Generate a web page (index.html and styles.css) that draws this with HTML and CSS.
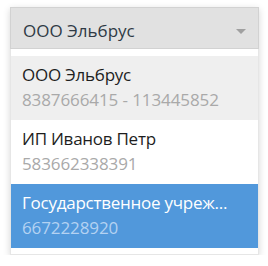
FILE: index.html
```html
<!DOCTYPE html>
<html lang="ru">
<head>
<meta charset="utf-8">
<link rel="stylesheet" href="styles.css">
</head>
<body>
<div class="picker">
  <div class="select">
    <span class="select-value">ООО Эльбрус</span>
    <span class="arrow"></span>
  </div>
  <ul class="menu">
    <li class="item hover">
      <div class="title">ООО Эльбрус</div>
      <div class="sub">8387666415 - 113445852</div>
    </li>
    <li class="item">
      <div class="title">ИП Иванов Петр</div>
      <div class="sub">583662338391</div>
    </li>
    <li class="item active">
      <div class="title">Государственное учреж...</div>
      <div class="sub">6672228920</div>
    </li>
  </ul>
</div>
</body>
</html>
```

FILE: styles.css
```css
html, body {
  margin: 0;
  padding: 0;
  background: #ffffff;
}
body {
  padding: 7px 9px 0 10px;
  font-family: "Open Sans", "Noto Sans", sans-serif;
  font-size: 17px;
  line-height: 25px;
}
.picker {
  width: 249px;
  box-shadow: 0 2px 7px rgba(0, 0, 0, 0.16);
}
.select {
  box-sizing: border-box;
  height: 42px;
  background: #e1e1e1;
  border: 1px solid #d2d2d2;
  padding: 10px 12px 0 12px;
  display: flex;
  justify-content: space-between;
  align-items: flex-start;
  color: #2f3a45;
}
.arrow {
  margin-top: 11px;
  width: 0;
  height: 0;
  border-left: 5px solid transparent;
  border-right: 5px solid transparent;
  border-top: 5px solid #a0a0a0;
}
.menu {
  list-style: none;
  margin: 0;
  padding: 7px 0 6px 0;
  background: #ffffff;
  border: 1px solid #e6e6e6;
  border-top: none;
}
.item {
  box-sizing: border-box;
  height: 64px;
  padding: 6px 11px 0 11px;
  color: #1e1e1e;
  white-space: nowrap;
  overflow: hidden;
}
.title {
  letter-spacing: -0.25px;
}
.sub {
  color: #a9a9a9;
  letter-spacing: -0.1px;
}
.item.hover {
  background: #efefef;
}
.item.active {
  background: #5198db;
  color: #ffffff;
}
.item.active .sub {
  color: #b4d2f2;
}
```
